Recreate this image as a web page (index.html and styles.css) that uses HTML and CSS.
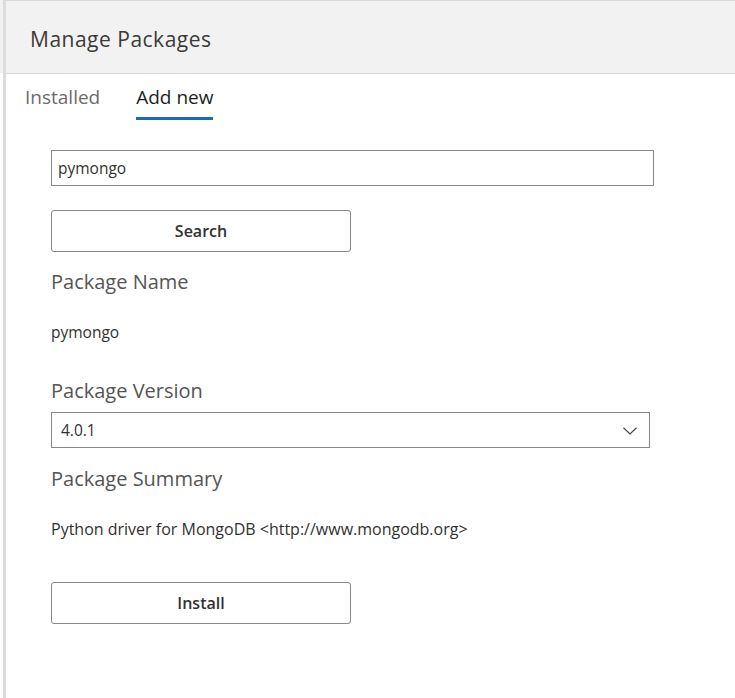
FILE: index.html
```html
<!DOCTYPE html>
<html>
<head>
<meta charset="utf-8">
<link rel="stylesheet" href="styles.css">
</head>
<body>
<div class="page">
  <div class="backdrop"></div>
  <div class="panel">
    <div class="header">
      <h1 class="title">Manage Packages</h1>
    </div>
    <div class="tabs">
      <div class="tab">Installed</div>
      <div class="tab active">Add new</div>
    </div>
    <div class="content">
      <div class="textbox">pymongo</div>
      <button class="btn search-btn">Search</button>
      <div class="label label-name">Package Name</div>
      <div class="value value-name">pymongo</div>
      <div class="label label-version">Package Version</div>
      <div class="select">
        <span>4.0.1</span>
        <svg class="chevron" width="14" height="8" viewBox="0 0 14 8"><path d="M0.5 0.8 L7 7 L13.5 0.8" fill="none" stroke="#444" stroke-width="1.2"/></svg>
      </div>
      <div class="label label-summary">Package Summary</div>
      <div class="value summary">Python driver for MongoDB &lt;http://www.mongodb.org&gt;</div>
      <button class="btn install-btn">Install</button>
    </div>
  </div>
</div>
</body>
</html>
```
FILE: styles.css
```css
html, body {
  margin: 0;
  padding: 0;
  background: #ffffff;
}
.page {
  display: flex;
  height: 698px;
  font-family: "Open Sans", "Noto Sans", sans-serif;
  color: #323130;
}
.backdrop {
  width: 3px;
  background: linear-gradient(#f2f2f2 0, #f2f2f2 73px, #ffffff 73px);
}
.panel {
  flex: 1;
  border-left: 3px solid #dcdcdc;
  display: flex;
  flex-direction: column;
}
.header {
  height: 72px;
  background: #f2f2f2;
  border-top: 1px solid #d8d8d8;
  border-bottom: 1px solid #d8d8d8;
  display: flex;
  align-items: center;
  padding-left: 24px;
}
.title {
  margin: 0;
  font-size: 21px;
  letter-spacing: 0.5px;
  font-weight: 400;
  color: #3b3a39;
  position: relative;
  top: 2px;
}
.tabs {
  display: flex;
  gap: 36px;
  padding-left: 19px;
  margin-top: 10px;
}
.tab {
  font-size: 19px;
  line-height: 26px;
  color: #6b6b6b;
  padding-bottom: 7px;
  border-bottom: 3px solid transparent;
}
.tab.active {
  color: #201f1e;
  border-bottom-color: #1f6bb3;
}
.content {
  padding-left: 45px;
  display: flex;
  flex-direction: column;
  align-items: flex-start;
}
.textbox {
  margin-top: 30px;
  width: 595px;
  height: 34px;
  border: 1px solid #8a8886;
  padding-left: 6px;
  display: flex;
  align-items: center;
  font-size: 15.5px;
  color: #323130;
}
.btn {
  width: 300px;
  height: 42px;
  background: #ffffff;
  border: 1px solid #8a8886;
  border-radius: 3px;
  font-family: "Open Sans", "Noto Sans", sans-serif;
  font-size: 16px;
  font-weight: 600;
  color: #323130;
  padding: 0;
}
.search-btn {
  margin-top: 24px;
}
.label {
  font-size: 20px;
  color: #555555;
  line-height: 28px;
}
.label-name {
  margin-top: 16px;
}
.value {
  font-size: 15.5px;
  color: #323130;
  line-height: 20px;
}
.value-name {
  margin-top: 26px;
}
.label-version {
  margin-top: 35px;
}
.select {
  margin-top: 7px;
  width: 576px;
  height: 34px;
  border: 1px solid #8a8886;
  padding-left: 9px;
  padding-right: 12px;
  display: flex;
  align-items: center;
  justify-content: space-between;
  font-size: 15.5px;
}
.chevron {
  margin-top: 1px;
}
.label-summary {
  margin-top: 17px;
}
.summary {
  font-size: 16px;
  margin-top: 26px;
}
.install-btn {
  margin-top: 43px;
}
```
